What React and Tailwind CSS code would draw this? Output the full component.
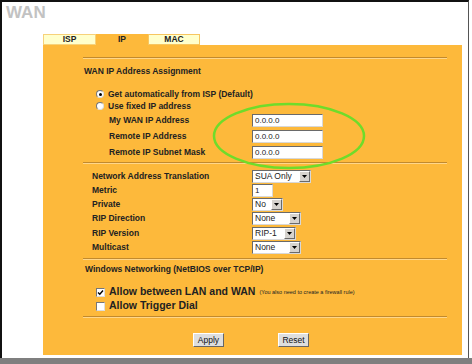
import React from 'react';

// WAN > IP configuration page

function Line() {
  return <div className="h-[2px] border-t border-b border-t-[#c18a2e] border-b-[#ffd68a]" />;
}

function Radio({ checked }) {
  return (
    <span className="w-[8px] h-[8px] rounded-full bg-white border border-t-[#777] border-l-[#777] border-r-[#ddd] border-b-[#ddd] flex items-center justify-center">
      {checked && <span className="w-[3px] h-[3px] rounded-full bg-black" />}
    </span>
  );
}

function Checkbox({ checked }) {
  return (
    <span className="w-[9px] h-[9px] bg-white border border-t-[#777] border-l-[#777] border-r-[#ddd] border-b-[#ddd] flex items-center justify-center">
      {checked && (
        <svg width="7" height="7" viewBox="0 0 7 7">
          <path d="M1 3.5 L2.8 5.3 L6 1.5" fill="none" stroke="#000" strokeWidth="1.4" />
        </svg>
      )}
    </span>
  );
}

function TextBox({ value, width }) {
  return (
    <div className={`${width} h-[13px] bg-white border border-t-[#6a6a6a] border-l-[#6a6a6a] border-r-[#d8d8d8] border-b-[#d8d8d8] pl-[2px] text-[8px] leading-[11px] text-[#222] font-normal`}>
      {value}
    </div>
  );
}

function Select({ value, width }) {
  return (
    <div className={`${width} h-[13px] bg-white border border-t-[#6a6a6a] border-l-[#6a6a6a] border-r-[#d8d8d8] border-b-[#d8d8d8] flex`}>
      <span className="flex-1 pl-[2px] text-[8.5px] leading-[11px] text-[#222] font-normal">{value}</span>
      <span className="w-[11px] h-full bg-[#d6d3ce] border border-t-white border-l-white border-r-[#6a6a6a] border-b-[#6a6a6a] flex items-center justify-center">
        <svg width="5" height="3" viewBox="0 0 5 3">
          <path d="M0 0 H5 L2.5 3 Z" fill="#000" />
        </svg>
      </span>
    </div>
  );
}

function Button({ label, className }) {
  return (
    <div className={`${className} w-[31px] h-[14px] bg-[#dedede] border border-t-white border-l-white border-r-[#666] border-b-[#666] flex items-center justify-center text-[8.5px] font-normal text-[#111]`}>
      {label}
    </div>
  );
}

const ipRows = [
  { label: 'My WAN IP Address', value: '0.0.0.0' },
  { label: 'Remote IP Address', value: '0.0.0.0' },
  { label: 'Remote IP Subnet Mask', value: '0.0.0.0' },
];

const natRows = [
  { label: 'Network Address Translation', h: 'h-[14px]', ctl: <Select value="SUA Only" width="w-[59px]" /> },
  { label: 'Metric', h: 'h-[14px]', ctl: <TextBox value="1" width="w-[21px]" /> },
  { label: 'Private', h: 'h-[14px]', ctl: <Select value="No" width="w-[31px]" /> },
  { label: 'RIP Direction', h: 'h-[15px]', ctl: <Select value="None" width="w-[49px]" /> },
  { label: 'RIP Version', h: 'h-[14px]', ctl: <Select value="RIP-1" width="w-[44px]" /> },
  { label: 'Multicast', h: 'h-[14px]', ctl: <Select value="None" width="w-[49px]" /> },
];

export default function App() {
  return (
    <div className="relative w-[472px] h-[364px] bg-white overflow-hidden flex flex-col font-['Liberation_Sans',Arial,sans-serif] font-bold text-[#222]">
      <div className="w-[469px] h-[358px] border-t-2 border-l-2 border-r border-t-[#111] border-l-[#111] border-r-[#555]">
        <div className="h-[32px] pl-[4px] pt-[1px] text-[17px] leading-[19px] text-[#c2c2c2]">WAN</div>

        <div className="ml-[41px] h-[11px] flex text-[8.5px] leading-[9px]">
          <div className="w-[53px] bg-[#ffffcc] border border-[#f7d27a] text-center">ISP</div>
          <div className="w-[52px] bg-[#fdb93b] text-center pt-px">IP</div>
          <div className="w-[52px] bg-[#ffffcc] border border-[#f7c660] text-center">MAC</div>
        </div>

        <div className="ml-[41px] w-[419px] h-[310px] bg-[#fdb93b] pt-[12px]">
          <div className="ml-[40px] w-[364px] flex flex-col">
            <Line />
            <div className="mt-[6px] h-[12px] pl-[1px] text-[8.5px] leading-[12px]">WAN IP Address Assignment</div>
            <div className="mt-[11px] h-[12px] flex items-center pl-[13px] text-[8.5px]">
              <Radio checked />
              <span className="ml-[4px]">Get automatically from ISP (Default)</span>
            </div>
            <div className="h-[12px] flex items-center pl-[13px] text-[8.5px]">
              <Radio />
              <span className="ml-[4px]">Use fixed IP address</span>
            </div>
            {ipRows.map((r) => (
              <div key={r.label} className="h-[16px] flex items-center text-[8.5px]">
                <span className="w-[169px] pl-[26px]">{r.label}</span>
                <TextBox value={r.value} width="w-[71px]" />
              </div>
            ))}
            <div className="mt-[2px]"><Line /></div>

            <div className="mt-[5px]">
              {natRows.map((r) => (
                <div key={r.label} className={`${r.h} flex items-center text-[8.5px]`}>
                  <span className="w-[169px] pl-[9px]">{r.label}</span>
                  {r.ctl}
                </div>
              ))}
            </div>
            <div className="mt-[4px]"><Line /></div>

            <div className="mt-[3px] h-[12px] pl-[2px] text-[8.5px] leading-[12px]">Windows Networking (NetBIOS over TCP/IP)</div>
            <div className="mt-[10px] h-[14px] flex items-center pl-[13px]">
              <Checkbox checked />
              <span className="ml-[4px] text-[10.5px]">Allow between LAN and WAN</span>
              <span className="ml-[4px] text-[5.5px] font-normal">(You also need to create a firewall rule)</span>
            </div>
            <div className="h-[14px] flex items-center pl-[13px]">
              <Checkbox />
              <span className="ml-[4px] text-[10.5px]">Allow Trigger Dial</span>
            </div>
            <div className="mt-[3px]"><Line /></div>

            <div className="mt-[15px] flex">
              <Button label="Apply" className="ml-[110px]" />
              <Button label="Reset" className="ml-[54px]" />
            </div>
          </div>
        </div>
      </div>
      <div className="h-[6px] bg-[#7f7f7f]" />

      <svg className="absolute left-0 top-0 pointer-events-none" width="472" height="364">
        <ellipse cx="289" cy="136" rx="75" ry="32" fill="none" stroke="#6fdc2a" strokeWidth="2.5" />
      </svg>
    </div>
  );
}
